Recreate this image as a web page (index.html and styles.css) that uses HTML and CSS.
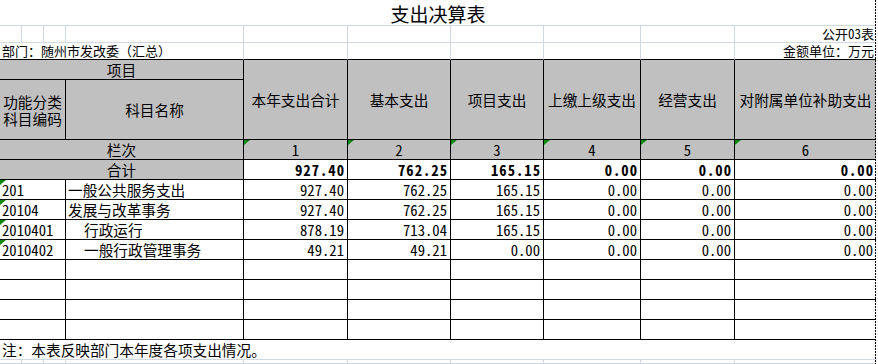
FILE: index.html
```html
<!DOCTYPE html>
<html lang="zh-CN">
<head>
<meta charset="utf-8">
<title>支出决算表</title>
<link rel="stylesheet" href="styles.css">
</head>
<body>
<div class="sheet">
  <div class="grid">
    <div class="c title all">支出决算表</div>

    <div class="c g"></div><div class="c g"></div><div class="c g"></div><div class="c g"></div><div class="c g"></div>
    <div class="c g"></div><div class="c g"></div><div class="c g"></div><div class="c g"></div>
    <div class="c g last right sm">公开<span class="d">03</span>表</div>

    <div class="c g tb span4 sm">部门：随州市发改委（汇总）</div>
    <div class="c g tb"></div><div class="c g tb"></div><div class="c g tb"></div><div class="c g tb"></div><div class="c g tb"></div>
    <div class="c g tb last right sm">金额单位：万元</div>

    <div class="c b hd span4">项目</div>
    <div class="c b hd r2">本年支出合计</div>
    <div class="c b hd r2">基本支出</div>
    <div class="c b hd r2">项目支出</div>
    <div class="c b hd r2">上缴上级支出</div>
    <div class="c b hd r2">经营支出</div>
    <div class="c b hd r2 last">对附属单位补助支出</div>
    <div class="c b hd span3 wrap">功能分类<br>科目编码</div>
    <div class="c b hd">科目名称</div>

    <div class="c b hd span4">栏次</div>
    <div class="c b hd d tri">1</div>
    <div class="c b hd d tri">2</div>
    <div class="c b hd d tri">3</div>
    <div class="c b hd d tri">4</div>
    <div class="c b hd d tri">5</div>
    <div class="c b hd d tri last">6</div>

    <div class="c b hd span4">合计</div>
    <div class="c b num d bold">927.40</div>
    <div class="c b num d bold">762.25</div>
    <div class="c b num d bold">165.15</div>
    <div class="c b num d bold">0.00</div>
    <div class="c b num d bold">0.00</div>
    <div class="c b num d bold last">0.00</div>

    <div class="c b span3 d tri">201</div>
    <div class="c b">一般公共服务支出</div>
    <div class="c b num d">927.40</div>
    <div class="c b num d">762.25</div>
    <div class="c b num d">165.15</div>
    <div class="c b num d">0.00</div>
    <div class="c b num d">0.00</div>
    <div class="c b num d last">0.00</div>

    <div class="c b span3 d tri">20104</div>
    <div class="c b">发展与改革事务</div>
    <div class="c b num d">927.40</div>
    <div class="c b num d">762.25</div>
    <div class="c b num d">165.15</div>
    <div class="c b num d">0.00</div>
    <div class="c b num d">0.00</div>
    <div class="c b num d last">0.00</div>

    <div class="c b span3 d tri">2010401</div>
    <div class="c b indent">行政运行</div>
    <div class="c b num d">878.19</div>
    <div class="c b num d">713.04</div>
    <div class="c b num d">165.15</div>
    <div class="c b num d">0.00</div>
    <div class="c b num d">0.00</div>
    <div class="c b num d last">0.00</div>

    <div class="c b span3 d tri">2010402</div>
    <div class="c b indent">一般行政管理事务</div>
    <div class="c b num d">49.21</div>
    <div class="c b num d">49.21</div>
    <div class="c b num d">0.00</div>
    <div class="c b num d">0.00</div>
    <div class="c b num d">0.00</div>
    <div class="c b num d last">0.00</div>

    <div class="c b span3"></div><div class="c b"></div><div class="c b"></div><div class="c b"></div><div class="c b"></div><div class="c b"></div><div class="c b"></div><div class="c b last"></div>
    <div class="c b span3"></div><div class="c b"></div><div class="c b"></div><div class="c b"></div><div class="c b"></div><div class="c b"></div><div class="c b"></div><div class="c b last"></div>
    <div class="c b span3"></div><div class="c b"></div><div class="c b"></div><div class="c b"></div><div class="c b"></div><div class="c b"></div><div class="c b"></div><div class="c b last"></div>
    <div class="c b span3"></div><div class="c b"></div><div class="c b"></div><div class="c b"></div><div class="c b"></div><div class="c b"></div><div class="c b"></div><div class="c b last"></div>

    <div class="c g all">注：本表反映部门本年度各项支出情况。</div>

    <div class="c g"></div><div class="c g"></div><div class="c g"></div><div class="c g"></div><div class="c g"></div>
    <div class="c g"></div><div class="c g"></div><div class="c g"></div><div class="c g"></div><div class="c g last"></div>
  </div>
</div>
</body>
</html>
```

FILE: styles.css
```css
html, body {
  margin: 0;
  padding: 0;
  background: #fff;
  overflow: hidden;
}

body {
  font-family: "Noto Sans CJK SC", "Noto Sans", sans-serif;
  font-size: 14.67px;
  color: #000;
}

.sheet {
  position: relative;
  width: 876px;
}

.sheet::after {
  content: "";
  position: absolute;
  top: 0;
  bottom: 0;
  right: 0;
  width: 1px;
  background: repeating-linear-gradient(to bottom, #000 0 2px, transparent 2px 3px);
}

.grid {
  display: grid;
  grid-template-columns: 22px 22px 22px 178px 104px 103px 93px 97px 94px 141px;
  grid-template-rows: 26px 17px 17px 20px 60px repeat(11, 20px) 4px;
}

.c {
  box-sizing: border-box;
  display: flex;
  align-items: center;
  padding: 0 2px;
  white-space: nowrap;
  overflow: hidden;
  position: relative;
  line-height: 16px;
}

.g {
  border-right: 1px solid #d0d7e5;
  border-bottom: 1px solid #d0d7e5;
}

.b {
  border-right: 1px solid #000;
  border-bottom: 1px solid #000;
}

.tb {
  border-bottom-color: #000;
}

.last {
  border-right: none;
}

.all {
  grid-column: span 10;
  border-right: none;
}

.span4 {
  grid-column: span 4;
}

.span3 {
  grid-column: span 3;
}

.r2 {
  grid-row: span 2;
}

.title {
  justify-content: center;
  font-size: 19px;
  line-height: 20px;
  border-bottom: 1px solid #d0d7e5;
  padding-top: 3px;
}

.sm {
  font-size: 13px;
  line-height: 14px;
  align-items: flex-end;
  padding-bottom: 1px;
  overflow: visible;
}

.right {
  justify-content: flex-end;
}

.hd {
  background: #c0c0c0;
  justify-content: center;
  text-align: center;
}

.wrap {
  white-space: normal;
  line-height: 17px;
}

.num {
  justify-content: flex-end;
  padding-right: 3px;
}

.d {
  font-feature-settings: "hwid" 1;
}

.bold {
  font-weight: 700;
  letter-spacing: 1px;
  padding-right: 2px;
}

.indent {
  padding-left: 18px;
}

.tri::before {
  content: "";
  position: absolute;
  left: 0;
  top: 0;
  width: 0;
  height: 0;
  border-top: 5px solid #0c8a0c;
  border-right: 6px solid transparent;
}
```
